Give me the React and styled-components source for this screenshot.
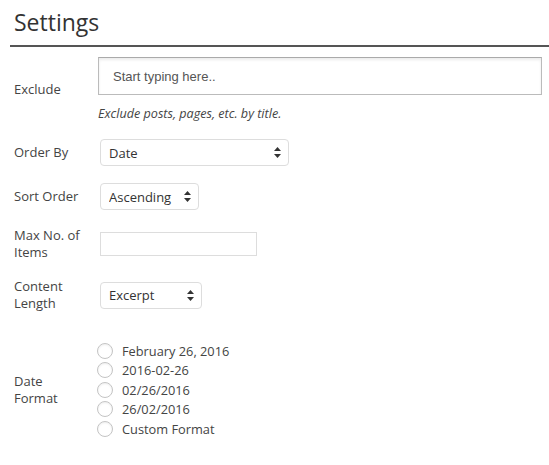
import React from 'react'
import styled, { createGlobalStyle } from 'styled-components'

const GlobalStyle = createGlobalStyle`
  body {
    margin: 0;
    background: #fff;
    font-family: "Open Sans", "Noto Sans", sans-serif;
    color: #444;
  }
`

function Arrows() {
    return (
        <svg width="7" height="11" viewBox="0 0 7 11">
            <path d="M3.5 0 L7 4 L0 4 Z" fill="#333" />
            <path d="M3.5 11 L7 7 L0 7 Z" fill="#333" />
        </svg>
    )
}

function Select({ width, value, options }) {
    return (
        <SelectWrap $width={width}>
            <SelectBox defaultValue={value}>
                {options.map((o) => (
                    <option key={o}>{o}</option>
                ))}
            </SelectBox>
            <ArrowSlot>
                <Arrows />
            </ArrowSlot>
        </SelectWrap>
    )
}

const dateFormats = [
    'February 26, 2016',
    '2016-02-26',
    '02/26/2016',
    '26/02/2016',
    'Custom Format',
]

function App() {
    return (
        <Page>
            <GlobalStyle />
            <Header>
                <Title>Settings</Title>
            </Header>
            <Form>
                <Row>
                    <Label>Exclude</Label>
                    <Field>
                        <TextInput placeholder="Start typing here.." />
                        <Description>Exclude posts, pages, etc. by title.</Description>
                    </Field>
                </Row>
                <Row>
                    <Label>Order By</Label>
                    <Field>
                        <Select width={189} value="Date" options={['Date', 'Title', 'Random']} />
                    </Field>
                </Row>
                <Row>
                    <Label>Sort Order</Label>
                    <Field>
                        <Select width={99} value="Ascending" options={['Ascending', 'Descending']} />
                    </Field>
                </Row>
                <Row>
                    <Label>Max No. of Items</Label>
                    <Field>
                        <SmallInput type="text" />
                    </Field>
                </Row>
                <Row>
                    <Label>Content Length</Label>
                    <Field>
                        <Select width={102} value="Excerpt" options={['Excerpt', 'Full']} />
                    </Field>
                </Row>
                <Row $spaced>
                    <Label>Date Format</Label>
                    <Field>
                        <RadioList>
                            {dateFormats.map((f) => (
                                <RadioOption key={f}>
                                    <Radio type="radio" name="date-format" />
                                    {f}
                                </RadioOption>
                            ))}
                        </RadioList>
                    </Field>
                </Row>
            </Form>
        </Page>
    )
}

const Page = styled.div`
    width: 549px;
    height: 465px;
    overflow: hidden;
`

const Header = styled.div`
    margin-left: 10px;
    padding: 7px 0 7px 4px;
    border-bottom: 2px solid #555;
`

const Title = styled.h1`
    margin: 0;
    font-size: 23px;
    font-weight: 400;
    line-height: 31px;
    color: #333;
`

const Form = styled.div`
    display: flex;
    flex-direction: column;
    gap: 17px;
    padding: 10px 7px 0 14px;
`

const Row = styled.div`
    display: flex;
    align-items: center;
    margin-top: ${(p) => (p.$spaced ? '12px' : '0')};
`

const Label = styled.div`
    width: 70px;
    margin-right: 14px;
    flex-shrink: 0;
    font-size: 13px;
    line-height: 17px;
    color: #444;
`

const Field = styled.div`
    flex: 1;
    display: flex;
    flex-direction: column;
    align-items: flex-start;
`

const TextInput = styled.input`
    box-sizing: border-box;
    width: 100%;
    height: 38px;
    margin: 0;
    padding: 0 14px;
    border: 1px solid #bbb;
    border-top-color: #aaa;
    box-shadow: inset 0 2px 3px rgba(0, 0, 0, 0.08);
    font-family: "Liberation Sans", Arial, sans-serif;
    font-size: 13px;
    outline: none;
    &::placeholder {
        color: #555;
    }
`

const Description = styled.p`
    margin: 10px 0 0;
    font-size: 12.6px;
    font-style: italic;
    line-height: 17px;
    color: #444;
`

const SelectWrap = styled.div`
    position: relative;
    width: ${(p) => p.$width}px;
    margin-left: 2px;
`

const SelectBox = styled.select`
    appearance: none;
    -webkit-appearance: none;
    box-sizing: border-box;
    width: 100%;
    height: 27px;
    margin: 0;
    padding: 0 20px 0 8px;
    border: 1px solid #ddd;
    border-radius: 4px;
    background: #fff;
    font-family: "Open Sans", sans-serif;
    font-size: 13px;
    color: #333;
    outline: none;
`

const ArrowSlot = styled.span`
    position: absolute;
    right: 8px;
    top: 8px;
    display: flex;
    pointer-events: none;
`

const SmallInput = styled.input`
    box-sizing: border-box;
    width: 157px;
    height: 24px;
    margin: 0 0 0 2px;
    border: 1px solid #ddd;
    outline: none;
`

const RadioList = styled.div`
    display: flex;
    flex-direction: column;
`

const RadioOption = styled.label`
    display: flex;
    align-items: center;
    height: 19.5px;
    font-size: 12.8px;
    color: #444;
`

const Radio = styled.input`
    appearance: none;
    -webkit-appearance: none;
    box-sizing: border-box;
    width: 16px;
    height: 16px;
    margin: 0 9px 0 -1px;
    border: 1px solid #c4c4c4;
    border-radius: 50%;
    background: #fff;
    box-shadow: inset 0 1px 2px rgba(0, 0, 0, 0.07);
`

export default App
